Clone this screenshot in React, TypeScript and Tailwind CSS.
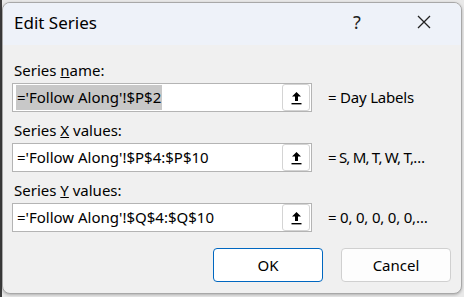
import React from "react";

const font = { fontFamily: '"Noto Sans", "Open Sans", sans-serif' };

function UpIcon() {
  return (
    <svg width="11" height="14" viewBox="0 0 11 14">
      <path d="M5.5 1 L10 5.5 L7 5.5 L7 10 L4 10 L4 5.5 L1 5.5 Z" fill="#000" />
      <rect x="0.5" y="12" width="10" height="1.4" fill="#000" />
    </svg>
  );
}

function Row({
  label,
  value,
  result,
  selected,
  tight,
}: {
  label: React.ReactNode;
  value: string;
  result: string;
  selected?: boolean;
  tight?: boolean;
}) {
  return (
    <div className="flex flex-col">
      <div className="h-[20px] leading-[20px] text-[15px] text-[#000] pl-[2px]">{label}</div>
      <div className="flex items-center mt-[3px]">
        <div className="w-[300px] h-[29px] bg-white border border-[#b4b4b4] flex items-center pl-[3px] pr-[1px]">
          <div className="flex-1 flex items-center h-full">
            <span
              className={
                "text-[15px] leading-[25px] h-[25px] px-[1px] text-black " +
                (selected ? "bg-[#c8c8c8]" : "")
              }
            >
              {value}
            </span>
          </div>
          <div className="w-[28px] h-[27px] rounded-[3px] border border-[#d4d4d4] bg-white flex items-center justify-center">
            <UpIcon />
          </div>
        </div>
        <div
          className={
            "ml-[16px] text-[15px] text-black " + (tight ? "tracking-[-0.8px]" : "tracking-[-0.2px]")
          }
        >
          {result}
        </div>
      </div>
    </div>
  );
}

export default function App() {
  return (
    <div className="w-[464px] h-[297px] bg-[#e9e9e9] relative overflow-hidden" style={font}>
      <div className="absolute left-0 top-0 w-[2px] h-full bg-[#3c3c3c]" />
      <div className="absolute left-[2px] top-[2px] w-[460px] h-[292px] rounded-[8px] border border-[#a8a8a8] overflow-hidden flex flex-col bg-[#f0f0f0] shadow-[0_1px_3px_rgba(0,0,0,0.25)]">
        <div className="h-[42px] bg-[#eef2f9] flex items-center pl-[11px] shrink-0">
          <div className="text-[17px] text-black flex-1 -mt-[2px]">Edit Series</div>
          <div className="w-[20px] text-[18px] text-[#222] text-center mr-[47px] -mt-[3px]">?</div>
          <div className="w-[20px] h-[20px] mr-[27px] flex items-center justify-center -mt-[4px]">
            <svg width="14" height="14" viewBox="0 0 14 14">
              <path d="M1 1 L13 13 M13 1 L1 13" stroke="#222" strokeWidth="1.3" />
            </svg>
          </div>
        </div>
        <div className="flex-1 flex flex-col pl-[9px] pt-[15px] gap-[8px]">
          <Row
            label={<>Series <u>n</u>ame:</>}
            value="='Follow Along'!$P$2"
            result="= Day Labels"
            selected
          />
          <Row
            label={<>Series <u>X</u> values:</>}
            value="='Follow Along'!$P$4:$P$10"
            result="= S, M, T, W, T,…"
            tight
          />
          <Row
            label={<>Series <u>Y</u> values:</>}
            value="='Follow Along'!$Q$4:$Q$10"
            result="= 0, 0, 0, 0, 0,…"
          />
          <div className="flex justify-end gap-[18px] pr-[10px] mt-[8px]">
            <button className="w-[110px] h-[34px] rounded-[4px] border-[1.5px] border-[#0067c0] bg-white text-[15px] text-black">
              OK
            </button>
            <button className="w-[110px] h-[34px] rounded-[4px] border border-[#d0d0d0] bg-[#fdfdfd] text-[15px] text-black">
              Cancel
            </button>
          </div>
        </div>
      </div>
    </div>
  );
}
